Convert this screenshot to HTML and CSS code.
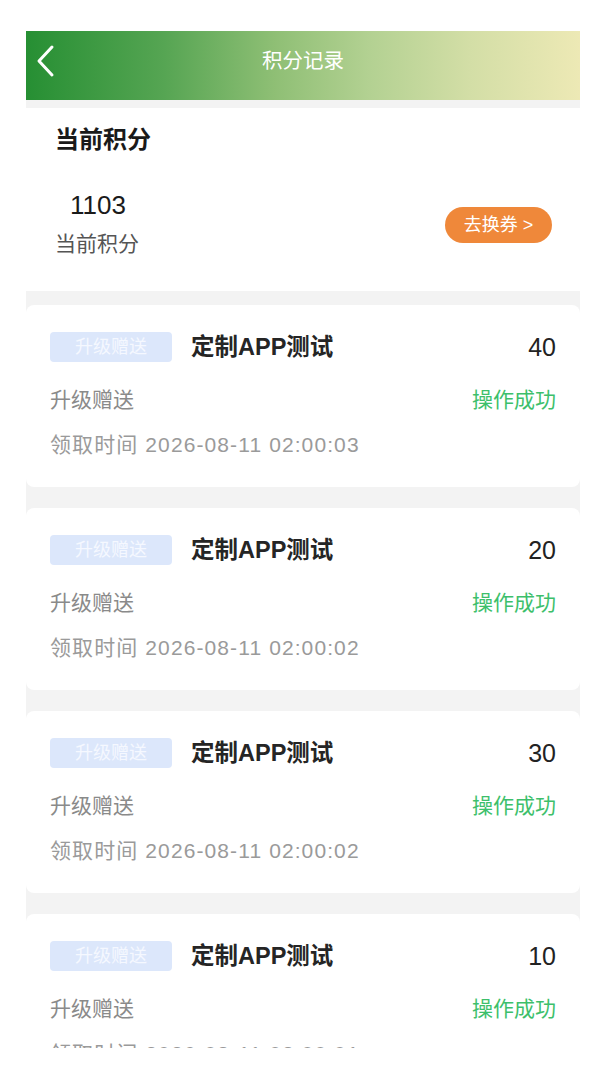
FILE: index.html
```html
<!DOCTYPE html>
<html lang="zh-CN">
<head>
<meta charset="utf-8">
<title>积分记录</title>
<link rel="stylesheet" href="styles.css">
</head>
<body>
<div class="screen">
  <header class="header">
    <span class="back">
      <svg width="20" height="34" viewBox="0 0 20 34"><path d="M16 3 L3 17 L16 31" fill="none" stroke="#fff" stroke-width="3" stroke-linecap="round" stroke-linejoin="round"/></svg>
    </span>
    <h1 class="header-title">积分记录</h1>
    <span></span>
  </header>
  <main class="content">
    <section class="summary">
      <h2 class="summary-title">当前积分</h2>
      <div class="summary-row">
        <div class="summary-left">
          <div class="points">1103</div>
          <div class="points-label">当前积分</div>
        </div>
        <button class="exchange">去换券 &gt;</button>
      </div>
    </section>

    <article class="card">
      <div class="row">
        <div class="row-left"><span class="tag">升级赠送</span><span class="name">定制APP测试</span></div>
        <span class="amount">40</span>
      </div>
      <div class="row row-2">
        <span class="type">升级赠送</span>
        <span class="status">操作成功</span>
      </div>
      <div class="time">领取时间 2026-08-11 02:00:03</div>
    </article>

    <article class="card">
      <div class="row">
        <div class="row-left"><span class="tag">升级赠送</span><span class="name">定制APP测试</span></div>
        <span class="amount">20</span>
      </div>
      <div class="row row-2">
        <span class="type">升级赠送</span>
        <span class="status">操作成功</span>
      </div>
      <div class="time">领取时间 2026-08-11 02:00:02</div>
    </article>

    <article class="card">
      <div class="row">
        <div class="row-left"><span class="tag">升级赠送</span><span class="name">定制APP测试</span></div>
        <span class="amount">30</span>
      </div>
      <div class="row row-2">
        <span class="type">升级赠送</span>
        <span class="status">操作成功</span>
      </div>
      <div class="time">领取时间 2026-08-11 02:00:02</div>
    </article>

    <article class="card">
      <div class="row">
        <div class="row-left"><span class="tag">升级赠送</span><span class="name">定制APP测试</span></div>
        <span class="amount">10</span>
      </div>
      <div class="row row-2">
        <span class="type">升级赠送</span>
        <span class="status">操作成功</span>
      </div>
      <div class="time">领取时间 2026-08-11 02:00:01</div>
    </article>
  </main>
</div>
</body>
</html>
```
FILE: styles.css
```css
* { box-sizing: border-box; }
html, body { margin: 0; padding: 0; background: #fff; }
body {
  font-family: "Liberation Sans", "Noto Sans CJK SC", sans-serif;
  color: #222;
}
.screen {
  width: 607px;
  padding: 31px 27px 0 26px;
}
.header {
  height: 69px;
  padding-bottom: 10px;
  display: grid;
  grid-template-columns: 44px 1fr 44px;
  align-items: center;
  background: linear-gradient(90deg, #268f33 0%, #56a553 25%, #8fbf75 45%, #b3d192 62%, #d3dea6 80%, #ede9b5 100%);
}
.back {
  display: flex;
  align-items: center;
  padding-left: 10px;
  height: 34px;
}
.back svg { display: block; }
.header-title {
  margin: 0;
  text-align: center;
  color: #fff;
  font-size: 20.5px;
  font-weight: normal;
  line-height: 30px;
}
.content {
  height: 948px;
  overflow: hidden;
  background: #f3f3f3;
  padding-top: 8px;
}
.summary {
  background: #fff;
  height: 183px;
  padding: 16px 28px 0 29px;
  margin-bottom: 14px;
}
.summary-title {
  margin: 0;
  font-size: 24px;
  line-height: 32px;
  font-weight: bold;
  color: #1a1a1a;
}
.summary-row {
  display: flex;
  justify-content: space-between;
  align-items: center;
  margin-top: 32px;
}
.points {
  padding-left: 15px;
  font-size: 26px;
  line-height: 34px;
  color: #1a1a1a;
}
.points-label {
  margin-top: 8px;
  font-size: 21px;
  line-height: 28px;
  color: #555;
}
.exchange {
  border: none;
  background: #ef883a;
  color: #fff;
  font-family: inherit;
  font-size: 18px;
  line-height: 36px;
  height: 36px;
  width: 107px;
  padding: 0;
  border-radius: 18px;
  margin-top: 4px;
}
.card {
  background: #fff;
  border-radius: 8px;
  height: 182px;
  padding: 27px 24px 0 24px;
  margin-bottom: 21px;
}
.row {
  display: flex;
  justify-content: space-between;
  align-items: center;
}
.row-left {
  display: flex;
  align-items: center;
}
.tag {
  width: 122px;
  height: 30px;
  border-radius: 4px;
  background: #dce7fb;
  color: #f5f8ff;
  font-size: 18px;
  line-height: 30px;
  text-align: center;
}
.name {
  margin-left: 19px;
  font-size: 23.5px;
  font-weight: bold;
  color: #252525;
  line-height: 30px;
}
.amount {
  font-size: 25px;
  color: #222;
  line-height: 30px;
}
.row-2 { margin-top: 23px; }
.type {
  font-size: 21px;
  line-height: 30px;
  color: #8a8a8a;
}
.status {
  font-size: 21px;
  line-height: 30px;
  color: #3dbf6b;
}
.time {
  margin-top: 15px;
  font-size: 21px;
  line-height: 30px;
  color: #9a9a9a;
  letter-spacing: 1.1px;
}
```
